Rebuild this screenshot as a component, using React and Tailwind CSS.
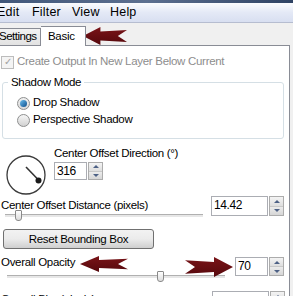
import React from 'react';

const Arrow = ({ dir = 'left', className = '' }) => (
  <svg viewBox="0 0 48 18" className={className} preserveAspectRatio="none">
    <defs>
      <linearGradient id={`ag-${dir}`} x1="0" y1="0" x2="0" y2="1">
        <stop offset="0" stopColor="#7a1418" />
        <stop offset="1" stopColor="#55080c" />
      </linearGradient>
    </defs>
    <polygon
      fill={`url(#ag-${dir})`}
      transform={dir === 'right' ? 'translate(48 0) scale(-1 1)' : undefined}
      points="0,9 19,0 19,4.5 48,3 38,9 48,15 19,13.5 19,18"
    />
  </svg>
);

const Spin = ({ value, className = '' }) => (
  <div className={`flex ${className}`}>
    <div className="flex-1 border border-[#abadb3] bg-white pl-[2px] text-[12px] leading-[16px] tracking-[-0.4px] text-black">{value}</div>
    <div className="ml-[1px] flex w-[15px] flex-col border border-[#acacac]">
      <div className="flex flex-1 items-center justify-center border-b border-[#c8c8c8] bg-gradient-to-b from-[#f4f4f4] to-[#dedede]">
        <div className="h-0 w-0 border-x-[3px] border-b-[3px] border-x-transparent border-b-[#4d6185]" />
      </div>
      <div className="flex flex-1 items-center justify-center bg-gradient-to-b from-[#ececec] to-[#d6d6d6]">
        <div className="h-0 w-0 border-x-[3px] border-t-[3px] border-x-transparent border-t-[#4d6185]" />
      </div>
    </div>
  </div>
);

const Slider = ({ pos, width }) => (
  <div className="relative h-[12px]" style={{ width }}>
    <div className="absolute left-0 right-0 top-[4px] h-[3px] border-t border-[#b0b0b0] bg-[#e7e7e7]" />
    <div className="absolute top-0 h-[11px] w-[7px] rounded-b-[3px] rounded-t-[1px] border border-[#8a8a8a] bg-gradient-to-b from-white to-[#dcdcdc]" style={{ left: pos }} />
  </div>
);

export default function App() {
  return (
    <div className="relative h-[296px] w-[293px] overflow-hidden bg-[#f0f0f0] font-['Liberation_Sans',sans-serif] text-[11.5px] tracking-[-0.3px] text-black">
      <div className="h-[3px] bg-gradient-to-r from-[#41577a] via-[#5d7090] to-[#2f4364]" />
      <div className="flex h-[20px] items-center border-b border-[#b6bdd0] bg-gradient-to-b from-[#fbfcfe] via-[#e4e9f6] to-[#d8dff1] text-[12.5px] tracking-[0.2px]">
        <span className="-ml-[3px] w-[35px]">Edit</span>
        <span className="w-[40px]">Filter</span>
        <span className="w-[38px]">View</span>
        <span>Help</span>
      </div>
      <div className="flex h-[22px] items-end">
        <div className="flex h-[17px] w-[41px] items-center border-r border-t border-[#898c95] bg-gradient-to-b from-[#f3f3f3] to-[#e2e2e2]">
          <span className="-ml-[1px] tracking-[-0.5px]">Settings</span>
        </div>
        <div className="relative z-10 -mb-[1px] h-[20px] w-[45px] border border-b-0 border-l-0 border-[#898c95] bg-white pl-[7px] pt-[3px] leading-[13px]">
          Basic
        </div>
      </div>
      <div className="flex">
        <div className="h-[260px] w-[290px] border-r border-t border-[#898c95] bg-white">
          <div className="mt-[9px] flex h-[14px] items-center pl-[1px] text-[#8d8d8d]">
            <div className="flex h-[13px] w-[13px] items-center justify-center border border-[#bcbcbc] bg-[#f4f4f4] text-[10px] leading-none text-[#a0a0a0]">✓</div>
            <span className="ml-[3px]">Create Output In New Layer Below Current</span>
          </div>
          <div className="relative ml-[2px] mt-[13px] h-[57px] w-[282px] rounded-[3px] border border-[#d5dfe5]">
            <span className="absolute -top-[8px] left-[5px] bg-white px-[3px] leading-[14px]">Shadow Mode</span>
            <div className="mt-[13px] flex h-[14px] items-center pl-[14px]">
              <div className="flex h-[13px] w-[13px] items-center justify-center rounded-full border border-[#8e8f8f] bg-gradient-to-b from-[#f0f0f0] to-[#dadada]">
                <div className="h-[7px] w-[7px] rounded-full bg-gradient-to-br from-[#6cc0f0] to-[#0c4f8c]" />
              </div>
              <span className="ml-[3px]">Drop Shadow</span>
            </div>
            <div className="mt-[3px] flex h-[14px] items-center pl-[14px]">
              <div className="h-[13px] w-[13px] rounded-full border border-[#8e8f8f] bg-gradient-to-b from-[#f6f6f6] to-[#d2d2d2]" />
              <span className="ml-[3px]">Perspective Shadow</span>
            </div>
          </div>
          <div className="mt-[7px] flex h-[50px]">
            <svg width="53" height="50" viewBox="0 0 53 50">
              <circle cx="26" cy="29" r="19" fill="none" stroke="#3a3a3a" strokeWidth="1.3" />
              <line x1="26" y1="21" x2="38.5" y2="34" stroke="#333" strokeWidth="1.6" />
              <circle cx="38.5" cy="34.5" r="3" fill="#1a1a1a" />
            </svg>
            <div className="ml-[1px] flex flex-col">
              <span className="h-[14px] leading-[14px]">Center Offset Direction (°)</span>
              <Spin value="316" className="mt-[2px] h-[18px] w-[49px]" />
            </div>
          </div>
          <div className="flex">
            <div className="flex w-[205px] flex-col">
              <span className="mt-[2px] h-[14px] pl-[1px] leading-[14px]">Center Offset Distance (pixels)</span>
              <div className="-mt-[2px] ml-[5px]">
                <Slider pos={10} width={198} />
              </div>
            </div>
            <Spin value="14.42" className="ml-[6px] h-[20px] w-[73px]" />
          </div>
          <button className="ml-[3px] mt-[7px] h-[20px] w-[151px] rounded-[3px] border border-[#707070] bg-gradient-to-b from-[#f2f2f2] via-[#ebebeb] to-[#cfcfcf] text-[11.5px] leading-[18px] tracking-[-0.3px]">
            Reset Bounding Box
          </button>
          <div className="mt-[6px] flex">
            <div className="flex w-[228px] flex-col">
              <span className="h-[14px] pl-[1px] leading-[14px]">Overall Opacity</span>
              <div className="ml-[7px] mt-[2px]">
                <Slider pos={150} width={218} />
              </div>
            </div>
            <Spin value="70" className="ml-[7px] mt-[2px] h-[19px] w-[49px]" />
          </div>
          <div className="flex">
            <span className="mt-[9px] w-[205px] pl-[1px] leading-[14px]">Overall Blur (pixels)</span>
            <Spin value="" className="ml-[7px] mt-[8px] h-[20px] w-[73px]" />
          </div>
        </div>
        <div className="flex-1" />
      </div>
      <Arrow dir="left" className="absolute left-[83px] top-[27px] h-[18px] w-[44px]" />
      <Arrow dir="left" className="absolute left-[80px] top-[256px] h-[16px] w-[48px]" />
      <Arrow dir="right" className="absolute left-[185px] top-[257px] h-[20px] w-[48px]" />
    </div>
  );
}
